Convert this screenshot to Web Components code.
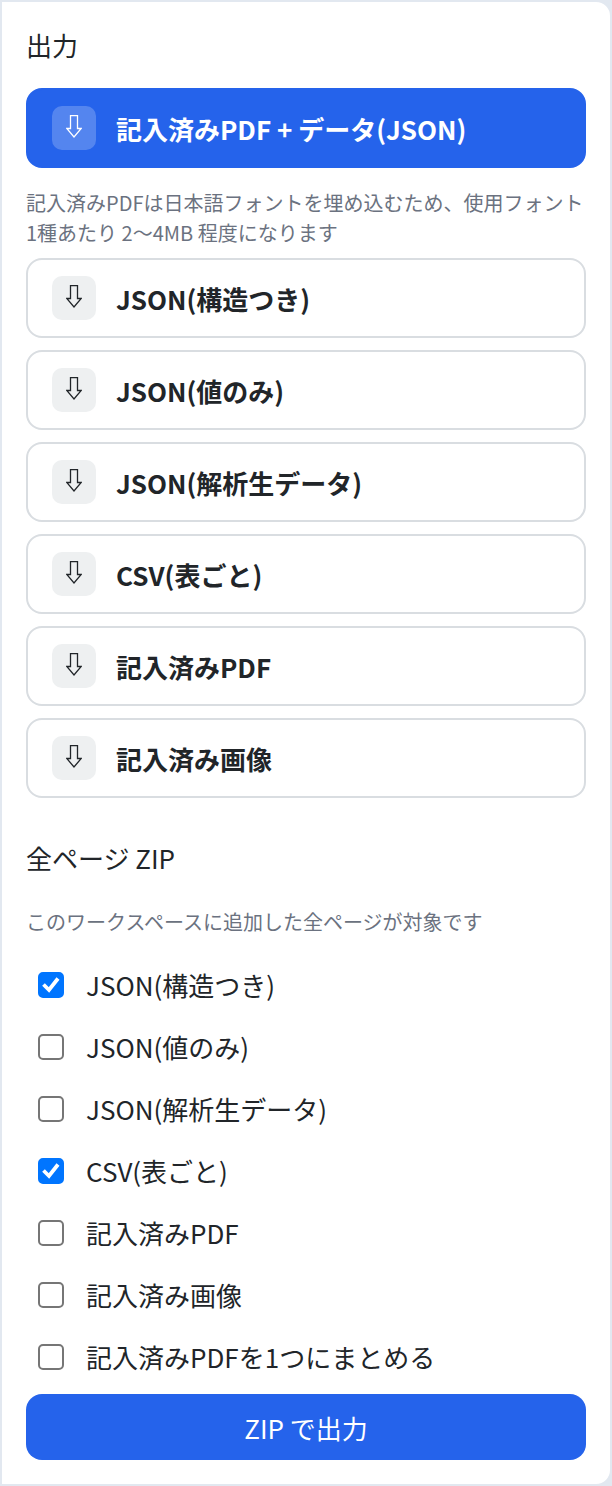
<!DOCTYPE html>
<html lang="ja">
<head>
<meta charset="utf-8">
<title>出力</title>
<style>
  html, body { margin: 0; background: #e2e8f0; }
  body { font-family: "Noto Sans CJK JP", "Noto Sans", sans-serif; color: #212529; }
</style>
</head>
<body>
<output-panel>
  <span slot="title">出力</span>
  <dl-button primary>記入済みPDF + データ(JSON)</dl-button>
  <hint-text lines>記入済みPDFは日本語フォントを埋め込むため、使用フォント1種あたり 2〜4MB 程度になります</hint-text>
  <dl-button>JSON(構造つき)</dl-button>
  <dl-button>JSON(値のみ)</dl-button>
  <dl-button>JSON(解析生データ)</dl-button>
  <dl-button>CSV(表ごと)</dl-button>
  <dl-button>記入済みPDF</dl-button>
  <dl-button>記入済み画像</dl-button>
  <zip-section slot="zip">
    <check-row checked>JSON(構造つき)</check-row>
    <check-row>JSON(値のみ)</check-row>
    <check-row>JSON(解析生データ)</check-row>
    <check-row checked>CSV(表ごと)</check-row>
    <check-row>記入済みPDF</check-row>
    <check-row>記入済み画像</check-row>
    <check-row>記入済みPDFを1つにまとめる</check-row>
  </zip-section>
</output-panel>

<script>
class OutputPanel extends HTMLElement {
  constructor() {
    super();
    this.attachShadow({ mode: "open" });
    this.shadowRoot.innerHTML = `
      <style>
        :host {
          display: block;
          box-sizing: border-box;
          width: 612px;
          height: 1486px;
          border: 2px solid #e2e8f0;
          border-radius: 0 16px 16px 0;
          background: #fff;
          padding: 24px 24px 0;
        }
        h2 {
          margin: 0 0 24px;
          font-size: 26px;
          line-height: 38px;
          font-weight: 400;
          color: #212529;
        }
        .list { display: flex; flex-direction: column; gap: 12px; }
      </style>
      <h2><slot name="title"></slot></h2>
      <div class="list"><slot></slot></div>
      <slot name="zip"></slot>
    `;
  }
}
customElements.define("output-panel", OutputPanel);

class DlButton extends HTMLElement {
  constructor() {
    super();
    this.attachShadow({ mode: "open" });
    this.shadowRoot.innerHTML = `
      <style>
        :host {
          display: flex;
          align-items: center;
          box-sizing: border-box;
          height: 80px;
          padding: 0 24px;
          gap: 20px;
          border: 2px solid #d9dde1;
          border-radius: 16px;
          background: #fff;
          color: #212529;
          font-size: 26px;
          font-weight: 700;
          line-height: 38px;
        }
        :host([primary]) {
          border-color: #2563eb;
          background: #2563eb;
          color: #fff;
        }
        .icon {
          flex: none;
          width: 44px;
          height: 44px;
          border-radius: 10px;
          background: #eef0f1;
          display: flex;
          align-items: center;
          justify-content: center;
        }
        :host([primary]) .icon { background: rgba(255, 255, 255, 0.22); }
        svg { display: block; width: 16px; height: 23px; margin-top: -3px; }
        path { fill: none; stroke: currentColor; stroke-width: 1.3; stroke-linejoin: miter; }
        .label { margin-top: 2px; white-space: nowrap; }
      </style>
      <span class="icon">
        <svg viewBox="0 0 16 23"><path d="M4.500 .7h7v12.800h3.700L8 22 .8 13.500h3.700z"/></svg>
      </span>
      <span class="label"><slot></slot></span>
    `;
  }
}
customElements.define("dl-button", DlButton);

class HintText extends HTMLElement {
  constructor() {
    super();
    this.attachShadow({ mode: "open" });
    this.shadowRoot.innerHTML = `
      <style>
        :host {
          display: block;
          margin: 8px 0 -2px;
          font-size: 20px;
          line-height: 30px;
          color: #6b7280;
        }
      </style>
      <slot></slot>
    `;
  }
}
customElements.define("hint-text", HintText);

class ZipSection extends HTMLElement {
  constructor() {
    super();
    this.attachShadow({ mode: "open" });
    this.shadowRoot.innerHTML = `
      <style>
        :host { display: block; margin-top: 41px; }
        h3 {
          margin: 0;
          font-size: 26px;
          line-height: 38px;
          font-weight: 400;
          color: #212529;
        }
        p {
          margin: 31px 0 16px;
          font-size: 20px;
          line-height: 28px;
          color: #6b7280;
        }
        .rows { display: flex; flex-direction: column; }
        .submit {
          display: flex;
          align-items: center;
          justify-content: center;
          height: 66px;
          margin-top: 8px;
          border-radius: 16px;
          background: #2563eb;
          color: #fff;
          font-size: 26px;
        }
      </style>
      <h3>全ページ ZIP</h3>
      <p>このワークスペースに追加した全ページが対象です</p>
      <div class="rows"><slot></slot></div>
      <div class="submit">ZIP で出力</div>
    `;
  }
}
customElements.define("zip-section", ZipSection);

class CheckRow extends HTMLElement {
  constructor() {
    super();
    this.attachShadow({ mode: "open" });
    this.shadowRoot.innerHTML = `
      <style>
        :host {
          display: flex;
          align-items: center;
          height: 62px;
          padding-left: 12px;
          gap: 22px;
          font-size: 26px;
          color: #212529;
        }
        .box {
          flex: none;
          box-sizing: border-box;
          width: 26px;
          height: 26px;
          margin-top: 4px;
          border: 2px solid #767676;
          border-radius: 5px;
          background: #fff;
        }
        :host([checked]) .box { border-color: #0075ff; background: #0075ff; }
        svg { display: none; width: 22px; height: 22px; }
        :host([checked]) svg { display: block; }
        path { fill: none; stroke: #fff; stroke-width: 3.8; stroke-linecap: butt; stroke-linejoin: miter; }
        .text { margin-top: 2px; }
      </style>
      <span class="box"><svg viewBox="0 0 22 22"><path d="M3.500 10.500l5.500 5.500L18 4.500"/></svg></span>
      <span class="text"><slot></slot></span>
    `;
  }
}
customElements.define("check-row", CheckRow);
</script>
</body>
</html>
